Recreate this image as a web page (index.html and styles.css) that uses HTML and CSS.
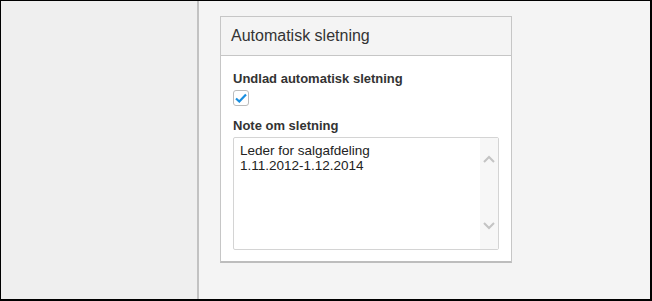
FILE: index.html
```html
<!DOCTYPE html>
<html lang="da">
<head>
    <meta charset="UTF-8">
    <title>Automatisk sletning</title>
    <link rel="stylesheet" href="styles.css">
</head>
<body>
    <div id="frame">
        <div id="sidebar"></div>
        <div id="main">
            <div class="panel">
                <div class="panel-header">Automatisk sletning</div>
                <div class="panel-body">
                    <div class="field-label">Undlad automatisk sletning</div>
                    <div class="checkbox">
                        <svg width="12" height="10" viewBox="0 0 12 10">
                            <path d="M1 5.5 L4.3 8.5 L11 1.5" fill="none" stroke="#1a8fe0" stroke-width="2.2"/>
                        </svg>
                    </div>
                    <div class="field-label note-label">Note om sletning</div>
                    <div class="note-box">
                        <div class="note-text">Leder for salgafdeling<br>1.11.2012-1.12.2014</div>
                        <div class="note-scroll">
                            <svg width="12" height="8" viewBox="0 0 12 8"><path d="M1 7 L6 2 L11 7" fill="none" stroke="#c4c4c4" stroke-width="2"/></svg>
                            <svg width="12" height="8" viewBox="0 0 12 8"><path d="M1 1 L6 6 L11 1" fill="none" stroke="#c4c4c4" stroke-width="2"/></svg>
                        </div>
                    </div>
                </div>
            </div>
        </div>
    </div>
</body>
</html>
```

FILE: styles.css
```css
body, html {
    margin: 0;
    background-color: black;
    font-family: "Liberation Sans", Arial, sans-serif;
}

#frame {
    box-sizing: border-box;
    width: 652px;
    height: 301px;
    display: flex;
    border-style: solid;
    border-color: black;
    border-width: 1px 2px 2px 1px;
}

#sidebar {
    width: 196px;
    background-color: #efefef;
    border-right: 2px solid #c2c2c2;
}

#main {
    flex: 1;
    background-color: #f4f4f4;
    padding: 15px 0 0 21px;
}

.panel {
    width: 290px;
    height: 244px;
    background-color: white;
    border: 1px solid #c6c6c6;
    border-bottom: 2px solid #bdbdbd;
}

.panel-header {
    height: 39px;
    box-sizing: border-box;
    padding: 10px 0 0 10px;
    background-color: #f4f4f4;
    border-bottom: 1px solid #c6c6c6;
    color: #333;
    font-size: 16px;
}

.panel-body {
    padding: 15px 12px 0 12px;
}

.field-label {
    font-size: 13px;
    font-weight: bold;
    color: #333;
    line-height: 16px;
}

.checkbox {
    box-sizing: border-box;
    width: 16px;
    height: 16px;
    margin-top: 3px;
    border: 1px solid #bcbcbc;
    border-radius: 3px;
    display: flex;
    align-items: center;
    justify-content: center;
}

.note-label {
    margin-top: 12px;
}

.note-box {
    box-sizing: border-box;
    width: 266px;
    height: 113px;
    margin-top: 3px;
    border: 1px solid #d4d4d4;
    border-radius: 2px;
    display: flex;
}

.note-text {
    flex: 1;
    padding: 5px 0 0 6px;
    font-size: 13.5px;
    line-height: 15px;
    color: #222;
}

.note-scroll {
    width: 18px;
    background-color: #f7f7f7;
    display: flex;
    flex-direction: column;
    justify-content: space-between;
    align-items: center;
    padding: 17px 0 19px 0;
}
```
